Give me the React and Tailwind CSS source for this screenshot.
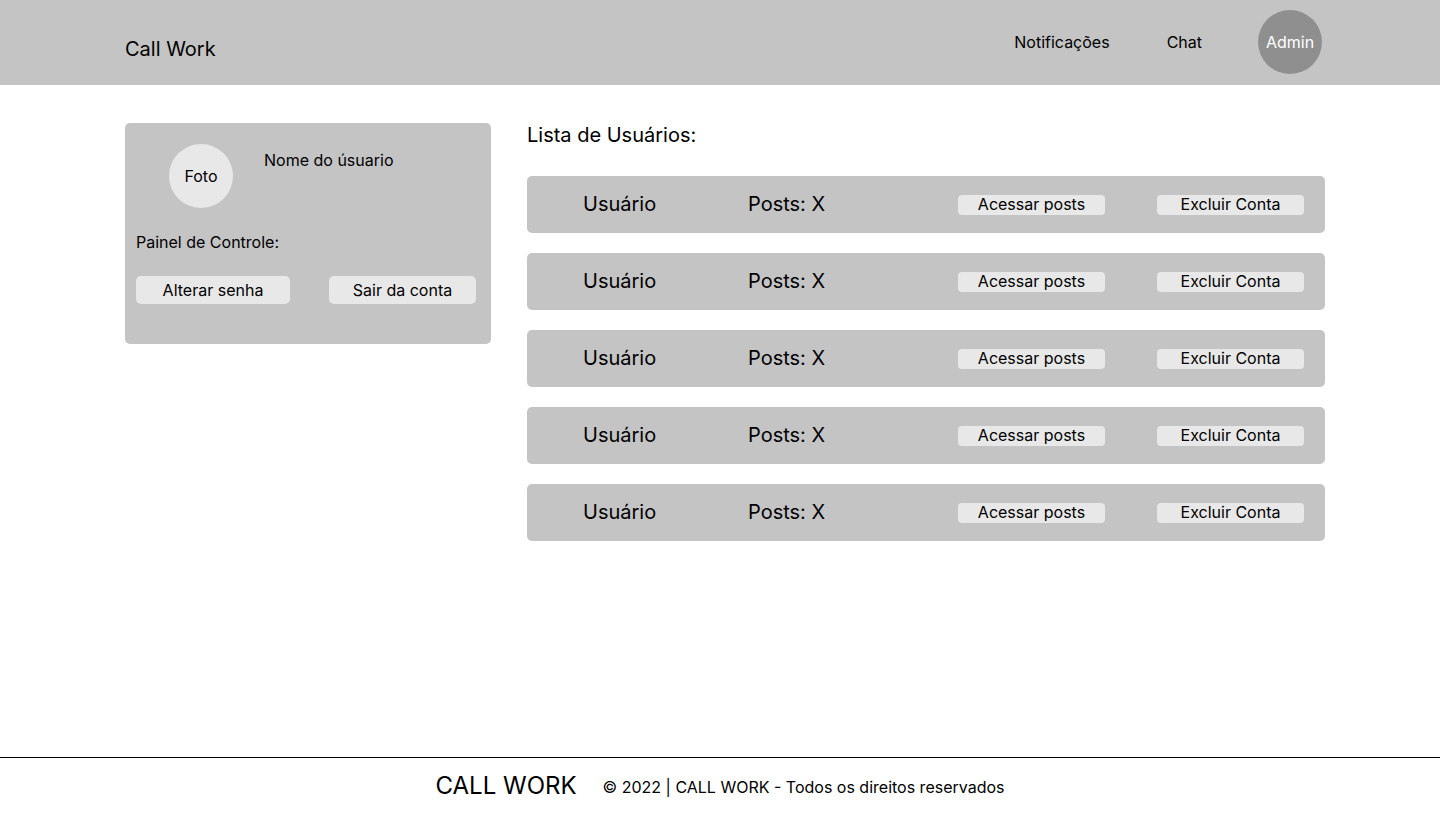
import React from "react";

// ─── Header ───────────────────────────────────────────────────────────────────
const Header = () => (
  <header className="h-[85px] bg-[#c4c4c4] shrink-0">
    <div className="h-full flex items-center justify-between pl-[125px] pr-[118px]">
      <h1 className="text-[20px] leading-6 text-black mt-[13px]">Call Work</h1>
      <nav className="flex items-center -mt-[1px]">
        <a className="text-base leading-6 text-black">Notificações</a>
        <a className="text-base leading-6 text-black ml-[57px]">Chat</a>
        <div className="ml-[56px] w-16 h-16 rounded-full bg-[#8f8f8f] flex items-center justify-center text-base text-white">
          Admin
        </div>
      </nav>
    </div>
  </header>
);

// ─── Profile card ─────────────────────────────────────────────────────────────
const ProfileCard = () => (
  <div className="w-[366px] h-[221px] shrink-0 bg-[#c4c4c4] rounded-[5px] px-[11px] pt-[21px]">
    <div className="flex items-start pl-[33px]">
      <div className="w-16 h-16 rounded-full bg-[#e8e8e8] flex items-center justify-center text-base text-black">
        Foto
      </div>
      <p className="ml-[31px] mt-[4px] text-base leading-6 text-black">Nome do úsuario</p>
    </div>
    <p className="mt-[22px] text-base leading-6 text-black">Painel de Controle:</p>
    <div className="mt-[22px] flex justify-between pr-[4px]">
      <button className="w-[154px] h-[28px] rounded-[5px] bg-[#e8e8e8] text-base text-black">
        Alterar senha
      </button>
      <button className="w-[147px] h-[28px] rounded-[5px] bg-[#e8e8e8] text-base text-black">
        Sair da conta
      </button>
    </div>
  </div>
);

// ─── User row ─────────────────────────────────────────────────────────────────
const UserRow = () => (
  <div className="h-[57px] bg-[#c4c4c4] rounded-[5px] flex items-center pl-[56px] pr-[21px]">
    <span className="w-[165px] text-[20px] leading-6 text-black -mt-[1px]">Usuário</span>
    <span className="flex-1 text-[20px] leading-6 text-black -mt-[1px]">Posts: X</span>
    <button className="w-[147px] h-[20px] rounded-[4px] bg-[#e8e8e8] text-base leading-4 pb-[2px] text-black">
      Acessar posts
    </button>
    <button className="ml-[52px] w-[147px] h-[20px] rounded-[4px] bg-[#e8e8e8] text-base leading-4 pb-[2px] text-black">
      Excluir Conta
    </button>
  </div>
);

// ─── App ──────────────────────────────────────────────────────────────────────
const App = () => (
  <div className="min-h-screen flex flex-col bg-white" style={{ fontFamily: "Inter, 'Noto Sans', sans-serif" }}>
    <Header />

    <main className="flex-1">
      <div className="ml-[125px] pt-[38px] flex gap-[36px]">
        <ProfileCard />
        <section className="w-[798px]">
          <h2 className="text-[20px] leading-6 text-black">Lista de Usuários:</h2>
          <div className="mt-[29px] flex flex-col gap-[20px]">
            {[0, 1, 2, 3, 4].map((i) => (
              <UserRow key={i} />
            ))}
          </div>
        </section>
      </div>
    </main>

    <footer className="h-[72px] shrink-0 border-t border-black flex justify-center items-start pt-[13px]">
      <span className="text-[24px] leading-[30px] text-black">CALL WORK</span>
      <span className="ml-[26px] mt-[4px] text-base leading-6 text-black">
        © 2022 | CALL WORK - Todos os direitos reservados
      </span>
    </footer>
  </div>
);

export default App;
